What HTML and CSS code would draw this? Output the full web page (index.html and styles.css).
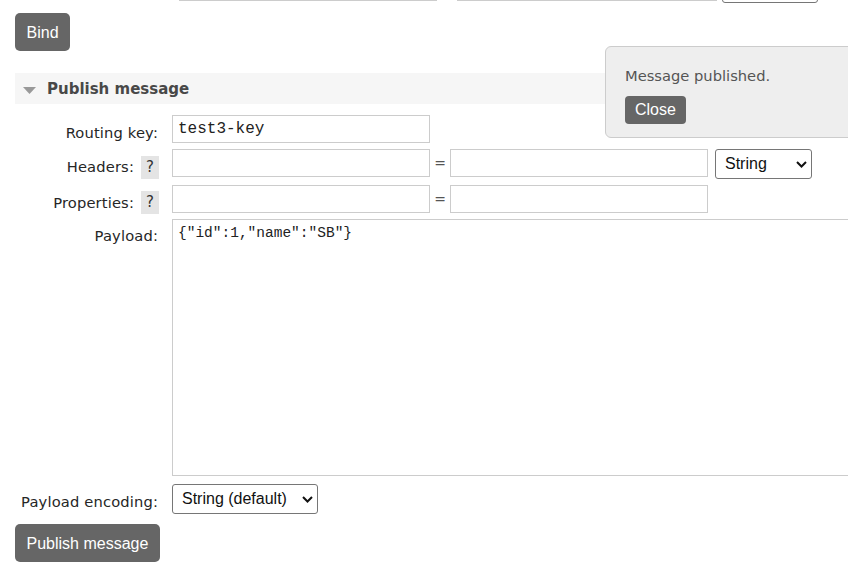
FILE: index.html
```html
<!DOCTYPE html>
<html>
<head>
<meta charset="utf-8">
<link rel="stylesheet" href="styles.css">
</head>
<body>
<div class="page">
  <div class="prev-row">
    <input class="prev-in1" type="text">
    <input class="prev-in2" type="text">
    <span class="prev-sel"></span>
  </div>
  <button class="btn btn-bind">Bind</button>
  <div class="section-head">
    <svg class="tri" width="13" height="7" viewBox="0 0 13 7"><polygon points="0,0 13,0 6.5,7" fill="#999"/></svg>
    <span class="section-title">Publish message</span>
  </div>
  <div class="form">
    <div class="row row-routing">
      <div class="lbl"><span class="lt">Routing key:</span></div>
      <input class="in" type="text" value="test3-key">
    </div>
    <div class="row row-headers">
      <div class="lbl"><span class="lt">Headers:</span><span class="help">?</span></div>
      <input class="in" type="text">
      <span class="eq">=</span>
      <input class="in" type="text">
      <span class="sel-wrap sel-type">
        <select class="sel"><option>String</option></select>
        <svg class="chev" width="11" height="7" viewBox="0 0 11 7"><polyline points="1,1 5.5,5.5 10,1" fill="none" stroke="#111" stroke-width="2"/></svg>
      </span>
    </div>
    <div class="row row-props">
      <div class="lbl"><span class="lt">Properties:</span><span class="help">?</span></div>
      <input class="in" type="text">
      <span class="eq">=</span>
      <input class="in" type="text">
    </div>
    <div class="row row-payload">
      <div class="lbl"><span class="lt lt-payload">Payload:</span></div>
      <textarea class="ta">{"id":1,"name":"SB"}</textarea>
    </div>
    <div class="row row-enc">
      <div class="lbl"><span class="lt">Payload encoding:</span></div>
      <span class="sel-wrap sel-enc">
        <select class="sel"><option>String (default)</option></select>
        <svg class="chev" width="11" height="7" viewBox="0 0 11 7"><polyline points="1,1 5.5,5.5 10,1" fill="none" stroke="#111" stroke-width="2"/></svg>
      </span>
    </div>
  </div>
  <button class="btn btn-publish">Publish message</button>
</div>
<div class="toast">
  <div class="toast-text">Message published.</div>
  <button class="btn-close">Close</button>
</div>
</body>
</html>
```
FILE: styles.css
```css
* { box-sizing: border-box; }
html, body {
  margin: 0;
  padding: 0;
  overflow: hidden;
  background: #fff;
  width: 848px;
  height: 570px;
}
body {
  font-family: "DejaVu Sans", Verdana, sans-serif;
  font-size: 14.7px;
  color: #262626;
  position: relative;
}
.page {
  padding-left: 15px;
}
.prev-row {
  display: flex;
  align-items: flex-start;
  margin-top: -27px;
  height: 30px;
}
.prev-in1, .prev-in2 {
  height: 28px;
  border: 1px solid #ccc;
  background: #fff;
}
.prev-in1 { width: 258px; margin-left: 164px; }
.prev-in2 { width: 260px; margin-left: 20px; }
.prev-sel {
  display: block;
  width: 96px;
  height: 30px;
  margin-left: 5px;
  border: 1px solid #767676;
  border-radius: 3px;
}
.btn {
  display: block;
  font-family: "Liberation Sans", Arial, sans-serif;
  font-size: 16px;
  color: #fff;
  background: #666;
  border: none;
  border-radius: 5px;
  height: 38px;
  padding: 1px 11.5px 0;
  line-height: 37px;
}
.btn-bind { margin-top: 10px; }
.section-head {
  display: flex;
  align-items: center;
  margin-top: 22px;
  height: 31px;
  background: #f6f6f6;
  padding-left: 8px;
  padding-top: 1px;
}
.tri { margin-top: 2px; margin-right: 11px; }
.section-title {
  font-weight: bold;
  font-size: 15px;
  color: #484848;
}
.form {
  display: flex;
  flex-direction: column;
  margin-top: 11px;
}
.row {
  display: flex;
  align-items: flex-start;
}
.row-headers { margin-top: 6px; height: 30px; }
.row-props { margin-top: 6px; height: 28px; }
.row-payload { margin-top: 6px; }
.row-enc { margin-top: 8px; }
.lbl {
  flex: none;
  width: 144px;
  margin-right: 13px;
  display: flex;
  justify-content: flex-end;
  align-items: flex-start;
}
.lt {
  display: block;
  line-height: 20px;
  padding-top: 8px;
  padding-right: 1px;
  letter-spacing: 0.15px;
}
.lt-payload { padding-top: 7px; }
.help {
  display: block;
  width: 18px;
  height: 23px;
  margin-top: 7px;
  margin-left: 6px;
  background: #e4e4e4;
  color: #333;
  text-align: center;
  line-height: 23px;
  font-size: 15px;
}
.row-props .help { margin-top: 6px; }
.in {
  flex: none;
  width: 258px;
  height: 28px;
  border: 1px solid #ccc;
  background: #fff;
  padding: 0 5px;
  font-family: "Liberation Mono", "Courier New", monospace;
  font-size: 16px;
  color: #222;
  outline: none;
}
.eq {
  flex: none;
  width: 20px;
  text-align: center;
  line-height: 28px;
  color: #555;
  font-size: 14px;
}
.sel-wrap {
  position: relative;
  display: block;
  flex: none;
}
.sel-type { width: 97px; margin-left: 7px; }
.sel-enc { width: 146px; }
.sel {
  display: block;
  width: 100%;
  height: 30px;
  appearance: none;
  -webkit-appearance: none;
  border: 1px solid #767676;
  border-radius: 3px;
  background: #fff;
  font-family: "Liberation Sans", Arial, sans-serif;
  font-size: 16px;
  color: #111;
  padding: 0 0 2px 9px;
  outline: none;
}
.chev {
  position: absolute;
  right: 5px;
  top: 12px;
  pointer-events: none;
}
.ta {
  flex: none;
  width: 720px;
  height: 257px;
  border: 1px solid #ccc;
  padding: 4px 5px;
  font-family: "Liberation Mono", "Courier New", monospace;
  font-size: 14.5px;
  line-height: 18px;
  color: #222;
  resize: none;
  outline: none;
}
.btn-publish { margin-top: 10px; }
.toast {
  position: absolute;
  left: 605px;
  top: 46px;
  width: 300px;
  height: 92px;
  background: #eee;
  border: 1px solid #ccc;
  border-radius: 6px;
  padding: 19px 0 0 19px;
  z-index: 5;
}
.toast-text {
  line-height: 20px;
  color: #555;
}
.btn-close {
  display: block;
  margin-top: 10px;
  height: 28px;
  padding: 0 10px;
  font-family: "Liberation Sans", Arial, sans-serif;
  font-size: 16px;
  line-height: 28px;
  color: #fff;
  background: #666;
  border: none;
  border-radius: 4px;
}
```
